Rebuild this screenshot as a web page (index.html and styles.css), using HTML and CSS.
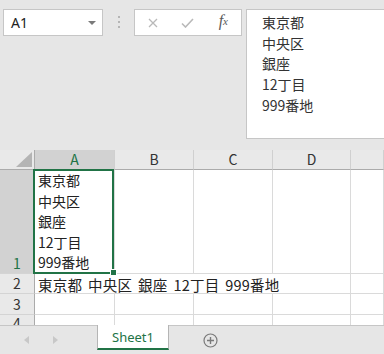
FILE: index.html
```html
<!DOCTYPE html>
<html lang="ja">
  <head>
    <meta charset="UTF-8" />
    <meta name="viewport" content="width=device-width, initial-scale=1.0" />
    <title>Sheet1</title>
    <link rel="stylesheet" href="styles.css">
  </head>
  <body>
    <div class="toolbar">
      <div class="name-box">
        <span>A1</span>
        <span class="caret"></span>
      </div>
      <div class="grip"><i></i><i></i><i></i></div>
      <div class="fx-buttons">
        <span class="btn">
          <svg width="10" height="10" viewBox="0 0 10 10">
            <path d="M1 1L9 9M9 1L1 9" stroke="#b9b9b9" stroke-width="1.3" fill="none" />
          </svg>
        </span>
        <span class="btn">
          <svg width="13" height="10" viewBox="0 0 13 10">
            <path d="M1 5.5L4.5 9L12 1" stroke="#b9b9b9" stroke-width="1.6" fill="none" />
          </svg>
        </span>
        <span class="btn fx">f<sub>x</sub></span>
      </div>
      <div class="formula">東京都<br />中央区<br />銀座<br />12丁目<br />999番地</div>
    </div>

    <div class="sheet">
      <div class="corner">
        <svg width="16" height="15" viewBox="0 0 16 15">
          <path d="M16 0L16 15L0 15Z" fill="#b4b4b4" />
        </svg>
      </div>
      <div class="col-head selected">A</div>
      <div class="col-head">B</div>
      <div class="col-head">C</div>
      <div class="col-head">D</div>
      <div class="col-head"></div>

      <div class="row-head selected">1</div>
      <div class="cell active">東京都<br />中央区<br />銀座<br />12丁目<br />999番地</div>
      <div class="cell"></div>
      <div class="cell"></div>
      <div class="cell"></div>
      <div class="cell"></div>

      <div class="row-head">2</div>
      <div class="cell overflow">東京都 中央区 銀座 12丁目 999番地</div>
      <div class="cell"></div>

      <div class="row-head">3</div>
      <div class="cell"></div>
      <div class="cell"></div>
      <div class="cell"></div>
      <div class="cell"></div>
      <div class="cell"></div>

      <div class="row-head top">4</div>
      <div class="cell"></div>
      <div class="cell"></div>
      <div class="cell"></div>
      <div class="cell"></div>
      <div class="cell"></div>
    </div>

    <div class="tabs">
      <div class="nav">
        <svg width="6" height="8" viewBox="0 0 6 8"><path d="M5 0L5 8L0 4Z" fill="#c8c8c8" /></svg>
        <svg width="6" height="8" viewBox="0 0 6 8"><path d="M1 0L1 8L6 4Z" fill="#c8c8c8" /></svg>
      </div>
      <div class="tab">Sheet1</div>
      <div class="rest">
        <svg width="15" height="15" viewBox="0 0 15 15">
          <circle cx="7.5" cy="7.5" r="6.5" stroke="#7a7a7a" stroke-width="1.2" fill="none" />
          <path d="M7.5 4V11M4 7.5H11" stroke="#7a7a7a" stroke-width="1.4" />
        </svg>
      </div>
    </div>
  </body>
</html>
```

FILE: styles.css
```css
body {
  margin: 0;
  width: 384px;
  height: 354px;
  overflow: hidden;
  background-color: #e6e6e6;
  font-family: "Noto Sans CJK JP", "Noto Sans", sans-serif;
  color: #222222;
}
.toolbar {
  display: flex;
  align-items: flex-start;
  height: 150px;
  padding: 9px 0 0 3px;
  box-sizing: border-box;
}
.name-box {
  width: 100px;
  height: 27px;
  box-sizing: border-box;
  border: 1px solid #c6c6c6;
  background-color: #ffffff;
  display: flex;
  align-items: center;
  justify-content: space-between;
  padding: 0 6px 0 7px;
  font-family: "Noto Sans", sans-serif;
  font-size: 14px;
}
.name-box .caret {
  width: 0;
  height: 0;
  border-left: 4px solid transparent;
  border-right: 4px solid transparent;
  border-top: 4px solid #7a7a7a;
  margin-top: 1px;
}
.grip {
  width: 31px;
  display: flex;
  flex-direction: column;
  align-items: center;
  gap: 3px;
  padding-top: 7px;
}
.grip i {
  width: 2px;
  height: 2px;
  background-color: #b5b5b5;
}
.fx-buttons {
  width: 108px;
  height: 27px;
  box-sizing: border-box;
  border: 1px solid #c6c6c6;
  background-color: #ffffff;
  display: flex;
}
.fx-buttons .btn {
  flex: 1;
  display: flex;
  align-items: center;
  justify-content: center;
}
.fx-buttons .fx {
  font-family: "Liberation Serif", serif;
  font-style: italic;
  font-size: 16px;
  color: #5a5a5a;
  padding-bottom: 3px;
}
.fx-buttons .fx sub {
  font-size: 11px;
  vertical-align: -2px;
}
.formula {
  flex: 1;
  margin-left: 4px;
  height: 130px;
  box-sizing: border-box;
  border: 1px solid #c6c6c6;
  border-right: none;
  background-color: #ffffff;
  padding: 2px 0 0 15px;
  font-size: 14px;
  line-height: 20.7px;
  color: #333333;
}
.sheet {
  height: 175px;
  overflow: hidden;
  display: grid;
  grid-template-columns: 35px 80px 79px 79px 78px 1fr;
  grid-template-rows: 20px 104px 20px 21px 20px;
  background-color: #ffffff;
}
.corner {
  background-color: #e9e9e9;
  border-right: 1px solid #ababab;
  border-bottom: 1px solid #ababab;
  display: flex;
  justify-content: flex-end;
  align-items: flex-end;
  padding: 0 2px 2px 0;
}
.col-head {
  background-color: #e9e9e9;
  border-right: 1px solid #d0d0d0;
  border-bottom: 1px solid #ababab;
  text-align: center;
  font-size: 14px;
  line-height: 19px;
  color: #333333;
}
.row-head {
  background-color: #e9e9e9;
  border-right: 1px solid #ababab;
  border-bottom: 1px solid #d4d4d4;
  display: flex;
  align-items: flex-end;
  justify-content: center;
  font-size: 14px;
  line-height: 20px;
  color: #333333;
}
.row-head.top {
  align-items: flex-start;
  line-height: 17px;
}
.selected {
  background-color: #d2d2d2;
  color: #217346;
}
.cell {
  border-right: 1px solid #dadada;
  border-bottom: 1px solid #dadada;
  padding-left: 3px;
  font-size: 14px;
  line-height: 20.6px;
  white-space: nowrap;
}
.cell.active {
  position: relative;
  display: flex;
  flex-direction: column;
  justify-content: flex-end;
}
.cell.active::after {
  content: "";
  position: absolute;
  top: -1px;
  left: -2px;
  right: 0;
  bottom: -1px;
  border: 2px solid #217346;
  z-index: 1;
}
.cell.active::before {
  content: "";
  position: absolute;
  right: -3px;
  bottom: -3px;
  width: 5px;
  height: 5px;
  background-color: #217346;
  border: 1px solid #ffffff;
  z-index: 2;
}
.cell.overflow {
  grid-column: 2 / 6;
  font-size: 14.5px;
  line-height: 21px;
  word-spacing: 2.5px;
  letter-spacing: 0.2px;
}
.tabs {
  display: flex;
  height: 29px;
  background-color: #e6e6e6;
}
.tabs .nav {
  width: 97px;
  border-top: 1px solid #c6c6c6;
  display: flex;
  align-items: center;
  gap: 22px;
  padding-left: 24px;
  box-sizing: border-box;
}
.tabs .tab {
  width: 72px;
  height: 25px;
  box-sizing: border-box;
  background-color: #ffffff;
  border-left: 1px solid #b5b5b5;
  border-right: 1px solid #b5b5b5;
  border-bottom: 2px solid #217346;
  text-align: center;
  font-family: "Noto Sans", sans-serif;
  font-size: 13px;
  line-height: 25px;
  color: #217346;
}
.tabs .rest {
  flex: 1;
  height: 28px;
  border-top: 1px solid #c6c6c6;
  display: flex;
  align-items: center;
  padding: 0 0 0 34px;
}
```
